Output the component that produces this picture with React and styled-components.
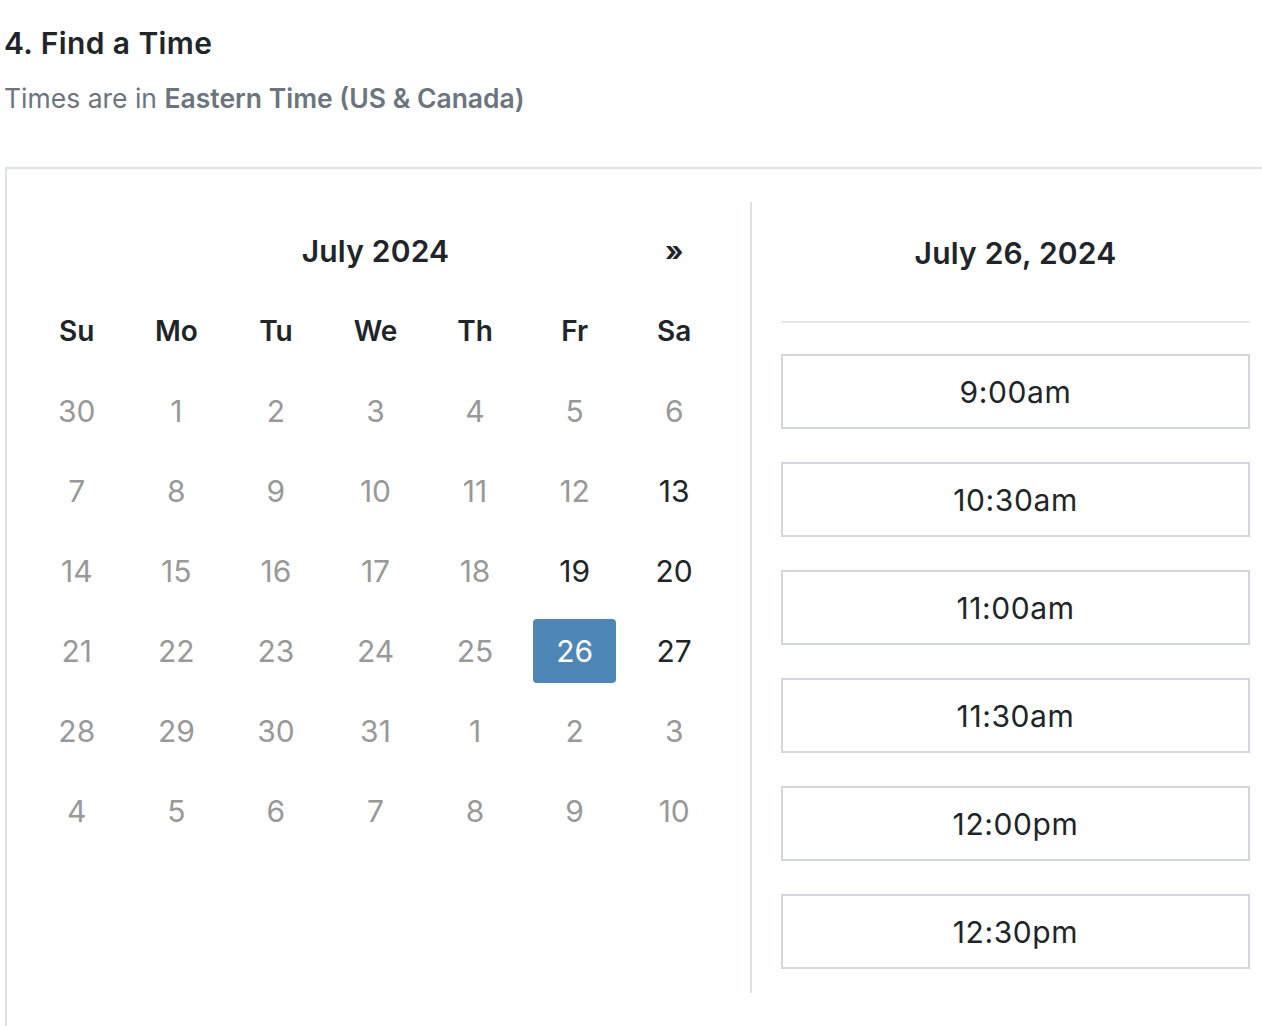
import styled, { createGlobalStyle } from "styled-components";

const GlobalStyle = createGlobalStyle`
  html, body {
    margin: 0;
    padding: 0;
    background: #fff;
    overflow: hidden;
  }
  body {
    font-family: "Inter", "Noto Sans", sans-serif;
    color: #212529;
  }
`;

const Page = styled.div`
  padding: 25px 0 0 4px;
`;

const Title = styled.h2`
  margin: 0;
  font-size: 30px;
  line-height: 36px;
  font-weight: 600;
  letter-spacing: 0.4px;
  color: #212529;
`;

const Subtitle = styled.p`
  margin: 18px 0 0;
  font-size: 26.5px;
  line-height: 38px;
  color: #6c757d;
  strong {
    font-weight: 600;
  }
`;

const Box = styled.div`
  margin-top: 50px;
  margin-left: 1px;
  width: 1300px;
  border-top: 2px solid #dee2e6;
  border-left: 2px solid #dee2e6;
  display: flex;
  padding: 33px 0 40px;
`;

const CalendarCol = styled.div`
  width: 723px;
  padding: 9px 0 0 20px;
`;

const Grid = styled.div`
  width: 697px;
  display: grid;
  grid-template-columns: repeat(7, 1fr);
  grid-auto-rows: 80px;
`;

const Month = styled.div`
  grid-column: 2 / 7;
  display: flex;
  align-items: center;
  justify-content: center;
  font-size: 30px;
  font-weight: 600;
  letter-spacing: 0.2px;
`;

const NextBtn = styled.button`
  grid-column: 7;
  border: none;
  background: none;
  font-family: inherit;
  font-size: 28px;
  font-weight: 700;
  color: #212529;
  cursor: pointer;
  padding: 0;
`;

const DayName = styled.div`
  display: flex;
  align-items: center;
  justify-content: center;
  font-size: 28px;
  font-weight: 600;
`;

const DateCell = styled.div`
  display: flex;
  align-items: center;
  justify-content: center;
`;

const DateNum = styled.span`
  width: 83px;
  height: 64px;
  display: flex;
  align-items: center;
  justify-content: center;
  font-size: 30px;
  border-radius: 4px;
  color: ${(p) => (p.$selected ? "#fff" : p.$available ? "#212529" : "#999")};
  background: ${(p) => (p.$selected ? "#4f86b8" : "transparent")};
  cursor: ${(p) => (p.$available ? "pointer" : "default")};
`;

const TimesCol = styled.div`
  border-left: 2px solid #dee2e6;
  width: 469px;
  padding: 0 30px 24px 29px;
  display: flex;
  flex-direction: column;
`;

const DateHeading = styled.h3`
  margin: 33px 0 0;
  text-align: center;
  font-size: 30px;
  line-height: 36px;
  font-weight: 600;
  letter-spacing: 0.2px;
`;

const Rule = styled.hr`
  margin: 50px 0 0;
  border: none;
  border-top: 2px solid #e6e8eb;
`;

const Slots = styled.div`
  margin-top: 31px;
  display: flex;
  flex-direction: column;
  gap: 33px;
`;

const Slot = styled.button`
  height: 75px;
  border: 2px solid #d3d7db;
  background: #fff;
  font-family: inherit;
  font-size: 30px;
  letter-spacing: 0.6px;
  color: #212529;
  cursor: pointer;
`;

const dayNames = ["Su", "Mo", "Tu", "We", "Th", "Fr", "Sa"];

const weeks = [
  [30, 1, 2, 3, 4, 5, 6],
  [7, 8, 9, 10, 11, 12, 13],
  [14, 15, 16, 17, 18, 19, 20],
  [21, 22, 23, 24, 25, 26, 27],
  [28, 29, 30, 31, 1, 2, 3],
  [4, 5, 6, 7, 8, 9, 10],
];

// week-day index of the dates that still have open slots
const available = ["1-6", "2-5", "2-6", "3-5", "3-6"];
const selected = "3-5";

const times = ["9:00am", "10:30am", "11:00am", "11:30am", "12:00pm", "12:30pm"];

export default function App() {
  return (
    <>
      <GlobalStyle />
      <Page>
        <Title>4. Find a Time</Title>
        <Subtitle>
          Times are in <strong>Eastern Time (US &amp; Canada)</strong>
        </Subtitle>
        <Box>
          <CalendarCol>
            <Grid>
              <Month>July 2024</Month>
              <NextBtn>»</NextBtn>
              {dayNames.map((d) => (
                <DayName key={d}>{d}</DayName>
              ))}
              {weeks.map((week, w) =>
                week.map((n, d) => {
                  const key = `${w}-${d}`;
                  return (
                    <DateCell key={key}>
                      <DateNum
                        $available={available.includes(key)}
                        $selected={key === selected}
                      >
                        {n}
                      </DateNum>
                    </DateCell>
                  );
                })
              )}
            </Grid>
          </CalendarCol>
          <TimesCol>
            <DateHeading>July 26, 2024</DateHeading>
            <Rule />
            <Slots>
              {times.map((t) => (
                <Slot key={t}>{t}</Slot>
              ))}
            </Slots>
          </TimesCol>
        </Box>
      </Page>
    </>
  );
}
